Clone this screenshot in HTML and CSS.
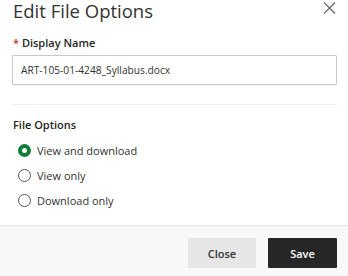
FILE: index.html
```html
<!DOCTYPE html>
<html lang="en">
<head>
<meta charset="utf-8">
<title>Edit File Options</title>
<link rel="stylesheet" href="styles.css">
</head>
<body>
<div class="dialog">
  <div class="body">
    <div class="header">
      <h1 class="title">Edit File Options</h1>
      <button class="close-x" aria-label="Close">
        <svg width="13" height="12" viewBox="0 0 13 12"><path d="M1 0.5 L12 11.5 M12 0.5 L1 11.5" stroke="#6b6b6b" stroke-width="1.3" fill="none"/></svg>
      </button>
    </div>
    <label class="field-label"><span class="req">*</span> Display Name</label>
    <div class="input">ART-105-01-4248_Syllabus.docx</div>
    <div class="divider"></div>
    <div class="group-label">File Options</div>
    <div class="radio-row"><span class="radio checked"></span><span>View and download</span></div>
    <div class="radio-row"><span class="radio"></span><span>View only</span></div>
    <div class="radio-row"><span class="radio"></span><span>Download only</span></div>
  </div>
  <div class="footer">
    <button class="btn btn-secondary">Close</button>
    <button class="btn btn-primary">Save</button>
  </div>
</div>
</body>
</html>
```
FILE: styles.css
```css
* { box-sizing: border-box; }
html, body { margin: 0; padding: 0; background: #fff; }
body { font-family: "Open Sans", "Noto Sans", sans-serif; color: #333; }
.dialog { width: 348px; height: 276px; display: flex; flex-direction: column; background: #fff; }
.body { flex: 1; padding: 0 11px 0 12px; }
.header { display: flex; justify-content: space-between; align-items: flex-start; height: 35px; }
.title { margin: 0 0 0 1px; font-size: 18.5px; font-weight: 400; line-height: 22px; padding-top: 0; color: #333; }
.close-x { border: 0; background: none; padding: 0; margin: 2px 1px 0 0; width: 13px; height: 12px; display: flex; }
.field-label { display: block; font-size: 11px; font-weight: 600; line-height: 15px; margin-left: 1px; color: #262626; }
.req { color: #c0392b; }
.input { margin-top: 5px; height: 30px; border: 1px solid #c9c9c9; border-radius: 1px; padding: 0 8px; font-size: 10.2px; line-height: 28px; color: #333; box-shadow: 0 1px 1px rgba(0,0,0,0.05); }
.divider { margin-top: 19px; height: 1px; background: #efefef; }
.group-label { margin-top: 12px; margin-left: 1px; font-size: 11px; font-weight: 600; line-height: 15px; color: #262626; }
.radio-row { margin-top: 0; display: flex; align-items: center; height: 25px; font-size: 11px; color: #333; }
.group-label + .radio-row { margin-top: 6px; }
.radio { width: 13px; height: 13px; border-radius: 50%; border: 1.5px solid #555; margin: 0 6px 0 6px; flex: none; }
.radio.checked { border: 4px solid #137a3c; }
.footer { height: 51px; border-top: 1px solid #e2e2e2; background: #f8f8f8; display: flex; justify-content: flex-end; align-items: flex-start; gap: 12px; padding: 12px 11px 0 0; }
.btn { height: 30px; border: 0; border-radius: 1px; font-family: inherit; font-size: 11px; font-weight: 600; padding: 0; }
.btn-secondary { width: 68px; background: #e6e6e6; color: #333; }
.btn-primary { width: 69px; background: #262626; color: #fff; }
```
